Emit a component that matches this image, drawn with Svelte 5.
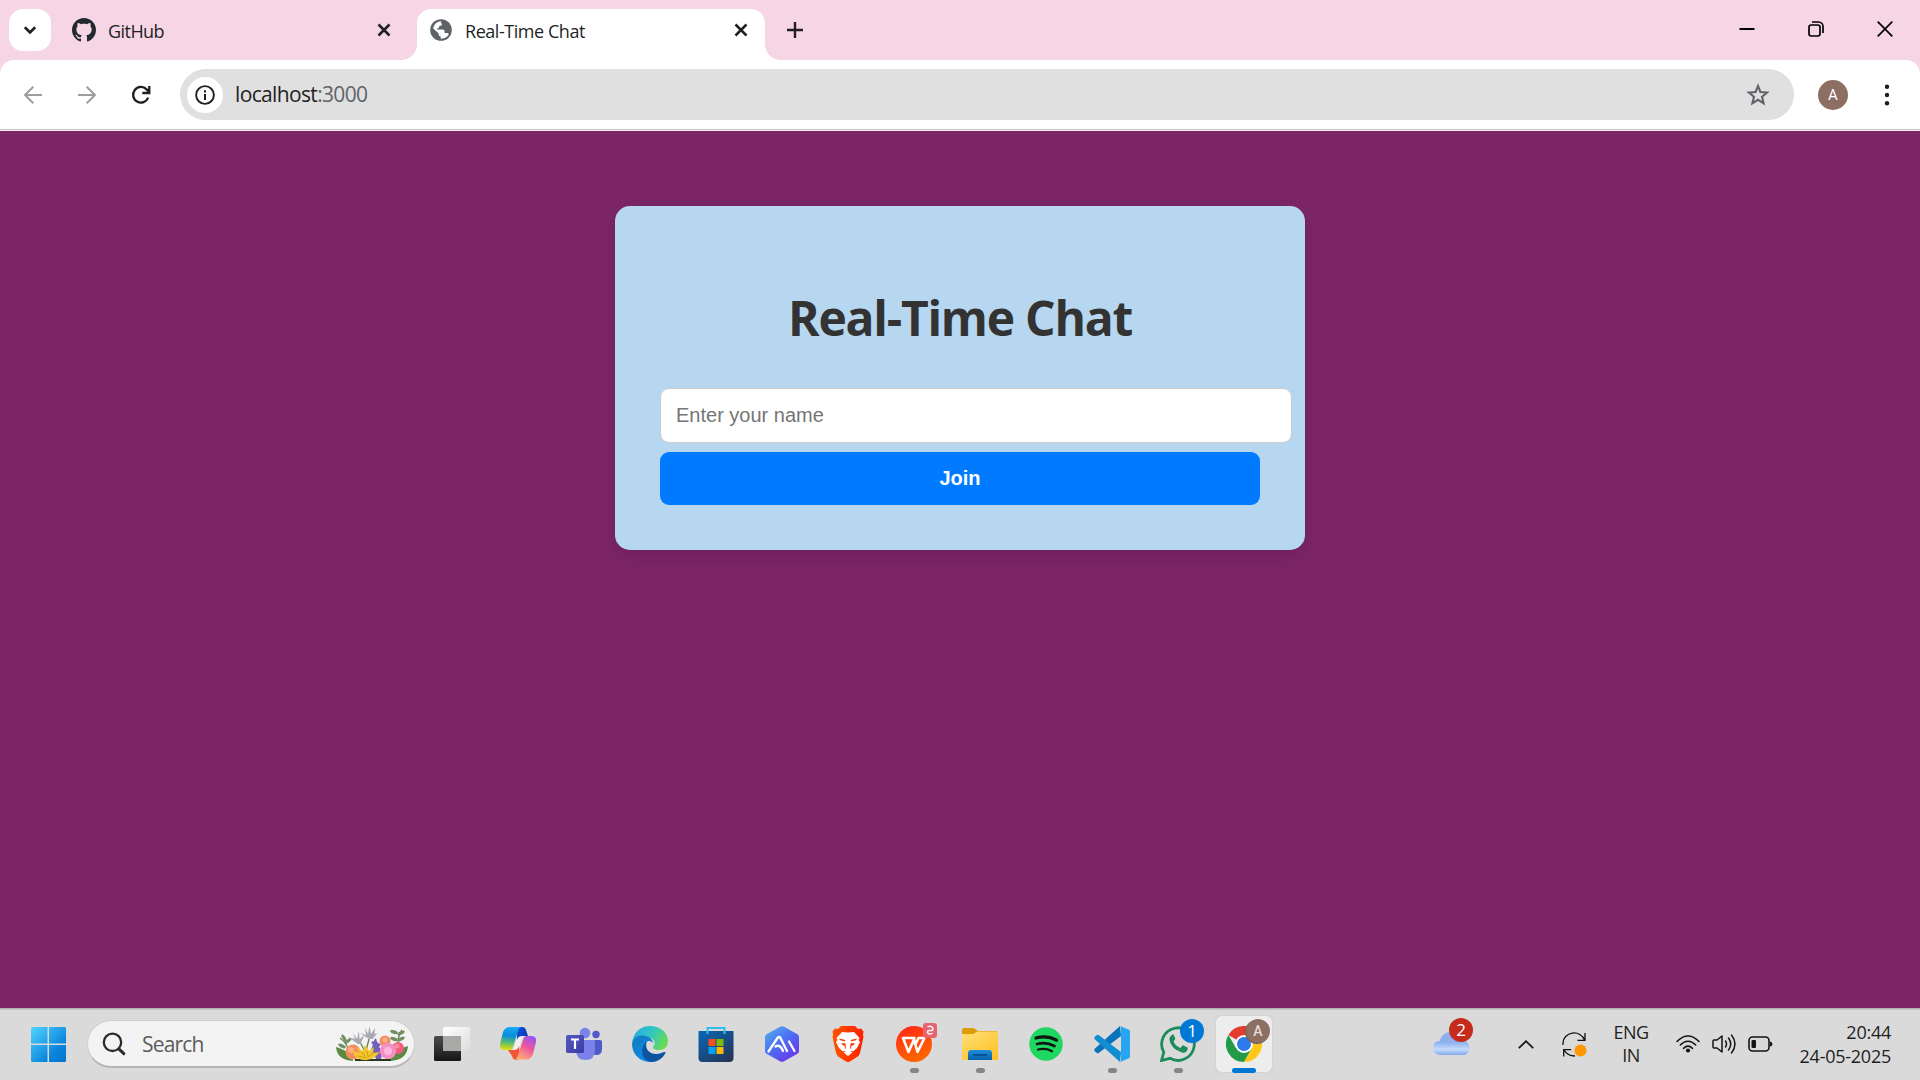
<script>
  let name = $state('');
  const petals = [0, 45, 90, 135, 180, 225, 270, 315];
</script>

<div class="screen">
  <div class="tabstrip">
    <button class="tab-search" aria-label="Search tabs">
      <svg width="42" height="42" viewBox="0 0 42 42"><path d="M15.8 18.3 21 23.4l5.2-5.1" fill="none" stroke="#1f1f1f" stroke-width="2.7" /></svg>
    </button>
    <div class="tab inactive">
      <svg class="favicon" width="24" height="24" viewBox="0 0 16 16"><path fill="#24292f" d="M8 0C3.58 0 0 3.58 0 8c0 3.54 2.29 6.53 5.47 7.59.4.07.55-.17.55-.38 0-.19-.01-.82-.01-1.49-2.01.37-2.53-.49-2.69-.94-.09-.23-.48-.94-.82-1.13-.28-.15-.68-.52-.01-.53.63-.01 1.08.58 1.23.82.72 1.21 1.87.87 2.33.66.07-.52.28-.87.51-1.07-1.78-.2-3.64-.89-3.64-3.95 0-.87.31-1.59.82-2.15-.08-.2-.36-1.02.08-2.12 0 0 .67-.21 2.2.82.64-.18 1.32-.27 2-.27s1.36.09 2 .27c1.53-1.04 2.2-.82 2.2-.82.44 1.1.16 1.92.08 2.12.51.56.82 1.27.82 2.15 0 3.07-1.87 3.75-3.65 3.95.29.25.54.73.54 1.48 0 1.07-.01 1.93-.01 2.2 0 .21.15.46.55.38A8.01 8.01 0 0 0 16 8c0-4.42-3.58-8-8-8Z" /></svg>
      <span class="tab-title github">GitHub</span>
      <svg class="x" width="14" height="14" viewBox="0 0 14 14"><path d="m1.5 1.5 11 11m0-11-11 11" stroke="#1f1f1f" stroke-width="2.5" /></svg>
    </div>
    <div class="tab active">
      <svg class="favicon" width="24" height="24" viewBox="0 0 24 24"><circle cx="12" cy="12" r="10.8" fill="#5f6368" /><path fill="#fff" d="M12.2 3.2c-.4 1.2-.1 2.2.7 2.7l-.2 1.5-2.3.4-.4 2-1.9.6v1.2h5.5c1.2 0 2 .9 2 2v1.5h2.3c1 0 1.7.7 1.9 1.5a8.7 8.7 0 0 1-8.1 4v-2.2c-1 0-2-.8-2-2v-1L4 10.2a8.7 8.7 0 0 1 8.2-7Z" /></svg>
      <span class="tab-title chat">Real-Time Chat</span>
      <svg class="x" width="14" height="14" viewBox="0 0 14 14"><path d="m1.5 1.5 11 11m0-11-11 11" stroke="#1f1f1f" stroke-width="2.5" /></svg>
    </div>
    <svg class="plus" width="16" height="16" viewBox="0 0 16 16"><path d="M8 0v16M0 8h16" stroke="#1f1f1f" stroke-width="2.4" /></svg>
    <div class="window-controls">
      <svg width="16" height="16" viewBox="0 0 16 16"><path d="M.5 8h15" stroke="#000" stroke-width="2" /></svg>
      <svg width="16" height="16" viewBox="0 0 16 16"><g fill="none" stroke="#000" stroke-width="1.7"><rect x="1" y="4" width="11" height="11" rx="2.2" /><path d="M4 1h6.5a4.5 4.5 0 0 1 4.5 4.5V12" /></g></svg>
      <svg width="16" height="16" viewBox="0 0 16 16"><path d="m.7.7 14.6 14.6m0-14.6L.7 15.3" stroke="#000" stroke-width="1.7" /></svg>
    </div>
  </div>

  <div class="toolbar">
    <svg class="nav" width="20" height="20" viewBox="0 0 20 20"><path d="M19 10H2.5M10.3 1.7 2 10l8.3 8.3" fill="none" stroke="#9e9e9e" stroke-width="2" /></svg>
    <svg class="nav" width="20" height="20" viewBox="0 0 20 20"><path d="M1 10h16.5M9.7 1.7 18 10l-8.300 8.3" fill="none" stroke="#9e9e9e" stroke-width="2" /></svg>
    <svg class="nav" width="20" height="20" viewBox="0 0 20 20"><path d="M17.2 12.6A7.800 7.800 0 1 1 15.600 4.400L17.600 6.500M18.300 1v7h-7" fill="none" stroke="#1f1f1f" stroke-width="2.3" /></svg>
    <div class="omnibox">
      <span class="info">
        <svg width="20" height="20" viewBox="0 0 20 20"><circle cx="10" cy="10" r="8.9" fill="none" stroke="#1f1f1f" stroke-width="1.9" /><path d="M10 9v6M10 5.200v2.200" stroke="#1f1f1f" stroke-width="2" /></svg>
      </span>
      <span class="url">localhost<span>:3000</span></span>
      <svg class="star" width="24" height="24" viewBox="0 0 24 24"><path d="m12 3 2.400 6 6.700.5-5.100 4.300 1.600 6.500-5.600-3.500-5.600 3.500 1.600-6.500-5.100-4.300 6.700-.5Z" fill="none" stroke="#5f6368" stroke-width="2.1" /></svg>
    </div>
    <span class="avatar">A</span>
    <svg class="dots" width="6" height="22" viewBox="0 0 6 22"><g fill="#1f1f1f"><circle cx="3" cy="2.700" r="2.200" /><circle cx="3" cy="11" r="2.200" /><circle cx="3" cy="19.300" r="2.200" /></g></svg>
  </div>

  <main>
    <div class="card">
      <h1>Real-Time Chat</h1>
      <input placeholder="Enter your name" bind:value={name} />
      <button class="join">Join</button>
    </div>
  </main>

  <footer>
    <svg class="start" width="35" height="35" viewBox="0 0 35 35">
      <defs><linearGradient id="win" gradientUnits="userSpaceOnUse" x1="0" y1="0" x2="35" y2="35"><stop offset="0" stop-color="#50d5ff" /><stop offset=".7" stop-color="#0a84dc" /><stop offset="1" stop-color="#0074cf" /></linearGradient></defs>
      <path fill="url(#win)" d="M1.500 0H16.500v16.500H0V1.500Q0 0 1.500 0ZM18 0h15.500Q35 0 35 1.500v15H18ZM0 18h16.500v17h-15Q0 35 0 33.500ZM18 18h17v15.500q0 1.500-1.500 1.500H18Z" />
    </svg>
    <div class="search">
      <svg width="24" height="24" viewBox="0 0 24 24"><circle cx="10.500" cy="10.300" r="8.700" fill="none" stroke="#2b2b2b" stroke-width="2.300" /><path d="m16.800 16.800 5 4.800" stroke="#2b2b2b" stroke-width="3" stroke-linecap="round" /></svg>
      <span>Search</span>
      <svg class="flowers" width="72" height="36" viewBox="0 0 72 36">
        <path fill="#5d8a43" d="M0 21q1 13 17 14-1-9-17-14ZM72 20q-1 14-18 15 2-10 18-15Z" />
        <g stroke="#67814c" stroke-width="1.300" fill="none"><path d="M4 12q9 6 9 18M66 4q-5 6-4 20M33 33 24 16M28 33l5-20M32 33l8-20" /></g>
        <g fill="#718f62"><ellipse cx="6" cy="20" rx="4" ry="1.700" transform="rotate(25 6 20)" /><ellipse cx="8" cy="12" rx="4" ry="1.600" transform="rotate(60 8 12)" /><ellipse cx="12" cy="15" rx="4" ry="1.500" transform="rotate(-40 12 15)" /><ellipse cx="58" cy="6" rx="4" ry="1.800" transform="rotate(20 58 6)" /><ellipse cx="65" cy="7" rx="4" ry="1.700" transform="rotate(-25 65 7)" /><ellipse cx="58" cy="13" rx="4" ry="1.800" transform="rotate(20 58 13)" /><ellipse cx="65" cy="13" rx="4" ry="1.700" transform="rotate(-25 65 13)" /></g>
        <g fill="#a9a9b6"><path d="m22 18-10-7 7 2-2-6 4 6 2-8 .5 8 5-4-4 9ZM33 13l-9-6 6 2-1-7 3 6 1.500-8 1.500 8 4-6-.5 6 3-1-5 6Z" /></g>
        <path fill="#7561bd" d="m39 12 3 5 3 1-2 3 4 4-2 8h-5l-4-9 1-5-2-3 3-1Z" />
        <g fill="#f28d5e"><circle cx="17" cy="26" r="7.500" /><circle cx="49" cy="15" r="5.500" /></g>
        <g fill="#ffb184"><circle cx="15" cy="24" r="3" /><circle cx="20" cy="28" r="2.500" /><circle cx="49" cy="14" r="2.500" /></g>
        <circle cx="62" cy="22" r="6" fill="#ee5d7d" />
        {#each petals as angle}
          <circle cx="52" cy="20.500" r="3.800" fill="#f48fc4" transform="rotate({angle} 52 25)" />
        {/each}
        <circle cx="52" cy="25" r="4" fill="#ffb7dc" /><circle cx="61" cy="20" r="2.500" fill="#ff8ca0" />
        <path d="M19 34h36" stroke="#293719" stroke-width="2" />
        <path fill="#f3c52c" d="m16 25 8 2-4-6 7 4 2-6 4 6 5-4-1 6 7-1-5 5q-8 6-18 1Z" /><path d="m22 30 8 2-4-6m5-1 1 6 5-4" stroke="#d6a212" fill="none" />
      </svg>
    </div>

    <div class="apps">
      <span class="app"><svg width="36" height="36" viewBox="0 0 36 36">
        <defs><linearGradient id="tvd" x2="0" y2="1"><stop stop-color="#4c4c4b" /><stop offset="1" stop-color="#161616" /></linearGradient><linearGradient id="tvl" x2="1" y2="1"><stop stop-color="#fff" /><stop offset="1" stop-color="#dcdcdc" /></linearGradient></defs>
        <rect y="10" width="27" height="25" rx="1.500" fill="url(#tvd)" /><rect x="9" y="1" width="27" height="24" rx="1.500" fill="url(#tvl)" /><path d="M9 10h18v15H10.500Q9 25 9 23.500Z" fill="#a9a9a8" />
      </svg></span>

      <span class="app"><svg width="36" height="36" viewBox="0 0 36 36">
        <defs>
          <linearGradient id="cp1" x1=".3" x2=".2" y2="1"><stop stop-color="#18a8f4" /><stop offset=".35" stop-color="#078ddc" /><stop offset=".65" stop-color="#54b979" /><stop offset="1" stop-color="#eee400" /></linearGradient>
          <linearGradient id="cp2" x1=".8" x2=".3" y2="1"><stop stop-color="#9553f3" /><stop offset=".45" stop-color="#ed55a1" /><stop offset="1" stop-color="#ffae72" /></linearGradient>
          <linearGradient id="cp3" x2="1" y2=".6"><stop stop-color="#0b54d7" /><stop offset="1" stop-color="#1638b8" /></linearGradient>
        </defs>
        <path fill="#f4f0f0" d="M18 10h5l-5 14h-5Z" />
        <path fill="url(#cp3)" d="M17 1h5.500q2.500 0 3.500 3l2 6h-6q-4 0-5 4Z" />
        <path fill="#f15534" d="M8 24h6q4 0 5-4l1 12q-1 2-4 2-3 0-4-4Z" />
        <path fill="url(#cp1)" d="M10 1h12q-3 0-4 4l-5 16q-1 3-4 3H5q-6 0-5-6l3-12Q5 1 10 1Z" />
        <path fill="url(#cp2)" d="M26 33.500H14q3-.5 4-4.500l5-15q1-4 4-4h4q6 0 5 6l-3 12q-2 5.500-7 5.500Z" />
      </svg></span>

      <span class="app"><svg width="36" height="36" viewBox="0 0 36 36">
        <defs><linearGradient id="tm" x2="1" y2="1"><stop stop-color="#5559c0" /><stop offset="1" stop-color="#393ca4" /></linearGradient></defs>
        <circle cx="30" cy="8.500" r="3.700" fill="#5059c9" /><path d="M25 14h9q2 0 2 2v7q0 6-6 6-4 0-5-4Z" fill="#5059c9" /><circle cx="19" cy="7" r="5.300" fill="#7b83eb" /><path d="M11 14h16.500q1.500 0 1.500 1.500V24q0 10-9.500 10T10 24Z" fill="#7b83eb" /><rect y="9" width="18" height="18" rx="1.700" fill="url(#tm)" /><path d="M5 13.500h8M9 13.500v9.500" stroke="#fff" stroke-width="2.200" />
      </svg></span>

      <span class="app"><svg width="36" height="36" viewBox="0 0 36 36">
        <defs><linearGradient id="eg" y1=".2" x2="1" y2=".6"><stop stop-color="#2aa8dd" /><stop offset=".5" stop-color="#31c7c4" /><stop offset="1" stop-color="#69dc4d" /></linearGradient><linearGradient id="eb" x2=".7" y2="1"><stop stop-color="#1379bd" /><stop offset="1" stop-color="#0c8eea" /></linearGradient></defs>
        <path fill="url(#eg)" d="M0 17C1 7 8 0 18 0c11 0 18 7 18 15 0 6-4 9-9 9-4 0-7-2-6-3 3-3 2-8-3-9C11 9 4 11 0 17Z" />
        <path fill="url(#eb)" d="M0 18c1-7 7-10 14-8 4 1 7 4 7 7-4-4-8-1-8 3 0 8 6 13 13 14-11 6-26-2-26-16Z" />
        <path fill="#0c53a0" d="M15 15c-3 7 2 13 9 13 4 0 7-2 9-2q1 0 .500 1c-3 6-9 9-14 9-9-1-13-13-4.500-21Z" />
      </svg></span>

      <span class="app"><svg width="36" height="36" viewBox="0 0 36 36">
        <defs><linearGradient id="st" x2=".8" y2="1"><stop stop-color="#0868b8" /><stop offset="1" stop-color="#253659" /></linearGradient></defs>
        <path d="M.5 5h35v27q0 4-4 4h-27q-4 0-4-4Z" fill="url(#st)" /><path d="M9.500 8V2h17v6" fill="none" stroke="#2cbff2" stroke-width="2" /><path fill="#f25022" d="M10.500 13h7v7h-7z" /><path fill="#7fba00" d="M18.500 13h7v7h-7z" /><path fill="#00a4ef" d="M10.500 21h7v7h-7z" /><path fill="#ffb900" d="M18.500 21h7v7h-7z" />
      </svg></span>

      <span class="app"><svg width="36" height="36" viewBox="0 0 36 36">
        <defs><linearGradient id="hx" x2=".8" y2="1"><stop stop-color="#55b4ec" /><stop offset=".5" stop-color="#4b70f4" /><stop offset="1" stop-color="#6c32e8" /></linearGradient></defs>
        <path d="M16 .800q2-1 4 0l13 7.200q2 1 2 3v14q0 2-2 3l-13 7.200q-2 1-4 0L3 28q-2-1-2-3V11q0-2 2-3Z" fill="url(#hx)" /><path d="M4.500 25.500 13.500 12q1.500-2 3 0L23 25M11.500 20.500q2.500-1.500 4.500 0t3 4.500M25 15.500l5.500 9.500" fill="none" stroke="#fff" stroke-width="2.300" stroke-linecap="round" />
      </svg></span>

      <span class="app"><svg width="36" height="36" viewBox="0 0 36 36">
        <defs><linearGradient id="br"><stop stop-color="#ff5500" /><stop offset="1" stop-color="#ff2000" /></linearGradient></defs>
        <path fill="url(#br)" d="M11 0h14l3 3 3-.500 2.500 3L33 9l.500 2L30 27q-1 3-3 4l-7 4.500q-2 1-4 0L9 31q-2-1-3-4L2.500 11 3 9l-.500-3.500 2.500-3L8 3Z" />
        <path fill="#fff" d="m18 6.500 6-.5 5.500 6-1 2 1.500 2-3 6-4 3.500-2.500-2 1-3.500 3.500-2-1.500-1-3 .5-.5 5 2.500 2-4.500 3-4.500-3 2.500-2-.5-5-3-.5-1.500 1 3.500 2 1 3.500-2.500 2L9 22l-3-6 1.500-2-1-2L12 6Z" />
        <path fill="#fb4315" d="m9.500 12.500 6 1.500-1 1.500-5-1.500ZM26.500 12.500l-6 1.500 1 1.500 5-1.500Z" /><path fill="#fff" d="m18 24.500 4.500 2-4.500 3.500-4.500-3.500Z" />
      </svg></span>

      <span class="app"><svg width="36" height="36" viewBox="0 0 36 36">
        <defs><linearGradient id="wp" x2=".4" y2="1"><stop stop-color="#ff2419" /><stop offset="1" stop-color="#ff6400" /></linearGradient></defs>
        <circle cx="18" cy="18" r="18" fill="url(#wp)" /><path d="M19.500 12H7l5.500 14L18 13.500 21.500 26 28.500 12h-6l-3.500 7" fill="none" stroke="#fff" stroke-width="2.600" stroke-linejoin="round" />
      </svg><span class="link-badge"><svg width="14" height="15" viewBox="0 0 14 15"><rect width="14" height="15" rx="3" fill="#e66370" /><path d="M4.500 4q2.500-1.500 4.500 0t0 3.500H6q-2 .5-1.500 2t2.500 1.500 2.500-1" fill="none" stroke="#fff" stroke-width="1.400" /></svg></span><i class="dot"></i></span>

      <span class="app"><svg width="36" height="36" viewBox="0 0 36 36">
        <defs><linearGradient id="fo" x2=".7" y2="1"><stop stop-color="#ffe078" /><stop offset="1" stop-color="#fdc228" /></linearGradient><linearGradient id="fb" x2="0" y2="1"><stop stop-color="#1c90dd" /><stop offset="1" stop-color="#0860a9" /></linearGradient></defs>
        <path d="M0 4q0-2 2-2h9q1 0 2 1l3 2h18q2 0 2 2v8H0Z" fill="#dc9b07" /><path d="M0 8h11q1 0 2-1l2-1.500h20q1 0 1 1V34H0Z" fill="url(#fo)" /><path d="M6 34v-7q0-3 3-3h18q3 0 3 3v7Z" fill="url(#fb)" /><path d="M11 29h14" stroke="#075294" stroke-width="2" />
      </svg><i class="dot"></i></span>

      <span class="app"><svg width="36" height="36" viewBox="0 0 36 36"><circle cx="18" cy="18" r="16.700" fill="#1ed760" /><g fill="none" stroke="#101510" stroke-linecap="round"><path d="M8 12q11-3 20.500 2.200" stroke-width="3.200" /><path d="M9 18q9-2.500 17.500 2" stroke-width="2.700" /><path d="M10 23.500q8-1.800 14 1.700" stroke-width="2.200" /></g></svg></span>

      <span class="app"><svg width="36" height="36" viewBox="0 0 36 36">
        <path d="M26 0 1 22.500q-1.500 1.500 0 3l1.500 1.300q1.200 1 2.500 0L27 10Z" fill="#0873b8" /><path d="M26 36 1 13.500q-1.500-1.500 0-3l1.500-1.300q1.200-1 2.500 0L27 26Z" fill="#118ed0" /><path d="m26 0 8.500 3.500Q36 4 36 5.500v25q0 1.500-1.500 2L26 36q1-1 1-2V2q0-1-1-2Z" fill="#27a5f1" />
      </svg><i class="dot"></i></span>

      <span class="app"><svg width="36" height="36" viewBox="0 0 36 36">
        <path d="m1.500 34.500 2.300-8.400A16.300 16.300 0 1 1 10 32.300Z" fill="none" stroke="#1d8c5b" stroke-width="2.800" /><path fill="#1d8c5b" d="M12 9q-3 2-2.500 5Q11 23 22 26.500q4 1 5.500-3 .500-1.500 0-2l-4-2q-1-.500-1.500.500l-1.500 2q-5-2-7-6.500l1.500-2q.500-.700 0-1.500l-1.500-3.500Q13 7.700 12 9Z" />
      </svg><span class="count">1</span><i class="dot"></i></span>

      <span class="app current"><svg width="36" height="36" viewBox="0 0 36 36">
        <path fill="#e33b2e" d="M18 18 2.400 9A18 18 0 0 1 33.600 9Z" /><path fill="#229b48" d="M2.400 9A18 18 0 0 0 18 36l7.800-13.500L18 18 10 22Z" /><path fill="#ffc817" d="M33.600 9H18v9l7.800 4.500L18 36A18 18 0 0 0 33.600 9Z" /><circle cx="18" cy="18" r="9" fill="#fff" /><circle cx="18" cy="18" r="7" fill="#2d7bea" />
      </svg><span class="profile">A</span><i class="line"></i></span>
    </div>

    <div class="tray">
      <span class="weather">
        <svg width="36" height="24" viewBox="0 0 36 24"><defs><linearGradient id="cl" x2="0" y2="1"><stop stop-color="#84a9ef" /><stop offset=".6" stop-color="#c4dcfb" /><stop offset="1" stop-color="#82a8ee" /></linearGradient></defs><path fill="#8eb0ef" d="M6 12Q8 0 18 0q9 0 11 8 7 1 7 8 0 7-7 7H9Z" /><path fill="url(#cl)" d="M8 23q-8 0-8-7t7-7q5 0 8 4 2-3 6-3h8q7 1 7 7 0 6-7 6Z" /></svg>
        <b>2</b>
      </span>
      <svg class="up" width="16" height="9" viewBox="0 0 16 9"><path d="m.800 8.200 7.200-7 7.200 7" fill="none" stroke="#1a1a1a" stroke-width="1.800" /></svg>
      <svg class="sync" width="25" height="25" viewBox="0 0 25 25"><g fill="none" stroke="#111" stroke-width="1.300"><path d="M1 13V11A11 10 0 0 1 22.500 8M23 1v7.300h-7.500M1.700 24.500V17.700h7.500M2 18Q5.500 24 13 24" /></g><circle cx="18.500" cy="18.500" r="6" fill="#ff9800" /></svg>
      <div class="lang"><span>ENG</span><span>IN</span></div>
      <svg class="wifi" width="24" height="18" viewBox="0 0 24 18"><g fill="none" stroke="#151515" stroke-width="1.600" stroke-linecap="round"><path d="M1 6.500Q12-4.500 23 6.500M4.300 10Q12 2.500 19.700 10M7.500 13.300q4.500-4.200 9 0" /></g><circle cx="12" cy="15.500" r="2.100" fill="#151515" /></svg>
      <svg class="sound" width="25" height="20" viewBox="0 0 25 20"><g fill="none" stroke="#151515" stroke-width="1.500" stroke-linejoin="round" stroke-linecap="round"><path d="M1 7q0-1 1-1h3l5-4v16l-5-4H2q-1 0-1-1ZM13.500 7q2 3 0 6M16.500 4q4.500 6 0 12M19.500 1q7 9 0 18" /></g></svg>
      <svg class="battery" width="25" height="16" viewBox="0 0 25 16"><rect x="1" y="1" width="20" height="14" rx="3.500" fill="none" stroke="#151515" stroke-width="1.600" /><rect x="3.500" y="4" width="4.500" height="8" rx="1" fill="#151515" /><path d="M22 5.500q2 0 2.500 2.500-.500 2.500-2.500 2.500Z" fill="#151515" /></svg>
      <div class="clock"><span class="time">20:44</span><span class="date">24-05-2025</span></div>
    </div>
  </footer>
</div>

<style>
  :global(body) { margin: 0; overflow: hidden; }
  .screen { width: 1920px; height: 1080px; display: flex; flex-direction: column; overflow: hidden; font-family: "Open Sans", "Noto Sans", sans-serif; background: #f6d5e4; color: #1f1f1f; }
  svg { display: block; flex: none; }
  button { font: inherit; border: 0; padding: 0; }

  .tabstrip { height: 60px; flex: none; display: flex; background: #f6d5e4; }
  .tab-search { width: 42px; height: 42px; margin: 9px 0 0 9px; border-radius: 14px; background: #fff; }
  .tab { box-sizing: border-box; height: 51px; margin-top: 9px; display: flex; align-items: flex-start; }
  .inactive { width: 366px; padding: 9px 26px 0 21px; }
  .active { position: relative; width: 348px; background: #fff; border-radius: 14px 14px 0 0; padding: 9px 17px 0 12px; }
  .active::before, .active::after { content: ""; position: absolute; bottom: 0; width: 15px; height: 15px; }
  .active::before { right: 100%; background: radial-gradient(circle at 0 0, transparent 14.5px, #fff 15px); }
  .active::after { left: 100%; background: radial-gradient(circle at 100% 0, transparent 14.5px, #fff 15px); }
  .tab-title { font-size: 18px; line-height: 26px; margin-left: 12px; white-space: nowrap; }
  .github { letter-spacing: -.55px; }
  .chat { letter-spacing: -.45px; }
  .x { margin: 5px 0 0 auto; }
  .plus { margin: 22px 0 0 22px; }
  .window-controls { display: flex; gap: 53px; margin: 21px 27px 0 auto; }

  .toolbar { height: 71px; box-sizing: border-box; flex: none; display: flex; align-items: center; padding: 0 30px 2px 23px; background: #fff; border-radius: 14px 14px 0 0; box-shadow: inset 0 -1px #f0eef0, inset 0 -2px #c8c8c8; }
  .nav { margin-right: 34px; }
  .nav:nth-child(3) { margin-right: 29px; }
  .omnibox { width: 1614px; height: 51px; box-sizing: border-box; flex: none; display: flex; align-items: center; padding: 0 24px 0 7px; background: #e0e0e0; border-radius: 26px; }
  .info { width: 36px; height: 36px; display: flex; align-items: center; justify-content: center; border-radius: 50%; background: #fff; }
  .url { margin-left: 12px; font-size: 21px; letter-spacing: -.65px; line-height: 30px; padding-bottom: 1px; }
  .url span { color: #5f6368; }
  .star { margin-left: auto; }
  .avatar { width: 30px; height: 30px; flex: none; margin-left: 24px; border-radius: 50%; background: #8d6e63; color: #fff; font: 15px/31px Roboto, sans-serif; text-align: center; }
  .dots { margin-left: auto; }

  main { flex: 1; display: flex; justify-content: center; align-items: flex-start; padding-top: 75px; background: #7b2565; }
  .card { width: 690px; height: 344px; box-sizing: border-box; padding: 80px 45px 45px; background: #b7d7f0; border-radius: 15px; box-shadow: 0 6px 18px rgba(0, 0, 0, .1); }
  h1 { margin: 0; height: 102px; font-size: 48px; line-height: 64px; text-align: center; color: #333; letter-spacing: -1.25px; white-space: nowrap; }
  input { display: block; width: 632px; height: 55px; box-sizing: border-box; padding: 0 15px; border: 1px solid #ccc; border-radius: 9px; background: #fff; font: 20px "Liberation Sans", Arial, sans-serif; outline: 0; }
  input::placeholder { color: #757575; opacity: 1; }
  .join { display: block; width: 600px; height: 53px; margin-top: 9px; border-radius: 9px; background: #007bff; color: #fff; font: bold 20px "Liberation Sans", Arial, sans-serif; }

  footer { height: 72px; box-sizing: border-box; flex: none; display: flex; align-items: center; padding: 0 29px 0 31px; background: #dadada; box-shadow: inset 0 1px #b3aeb1, inset 0 2px #c6c6c6; }
  .search { width: 328px; height: 48px; box-sizing: border-box; margin-left: 21px; padding: 0 6px 0 14px; display: flex; align-items: center; border: 1px solid #cecece; border-width: 1px 1px 2px; border-bottom-color: #b5b5b5; border-radius: 24px; background: #f3f3f3; }
  .search span { margin-left: 16px; font-size: 21px; letter-spacing: -.8px; line-height: 30px; color: #5c5c5c; }
  .flowers { margin-left: auto; }
  .apps { display: flex; margin-left: 4px; }
  .app { position: relative; width: 66px; height: 72px; display: flex; align-items: center; justify-content: center; }
  .dot, .line { position: absolute; bottom: 7px; left: 29px; width: 9px; height: 5px; border-radius: 3px; background: #858585; }
  .line { left: 21px; width: 24px; background: #0078d4; }
  .current::before { content: ""; position: absolute; left: 5px; top: 8px; width: 56px; height: 56px; border-radius: 6px; background: #ededed; box-shadow: 0 0 0 1px #d2d2d2; }
  .current svg { position: relative; }
  .link-badge { position: absolute; left: 42px; top: 15px; }
  .count, .profile { position: absolute; left: 35px; top: 11px; width: 24px; height: 24px; border-radius: 50%; background: #0078d4; color: #fff; font-size: 17px; line-height: 24px; text-align: center; }
  .profile { background: #8d6e63; color: #e4dcd9; font: 500 14px/25px Roboto, sans-serif; box-shadow: -1px 1px #755a52; }

  .tray { margin-left: auto; display: flex; align-items: center; }
  .weather { position: relative; margin-right: 49px; }
  .weather b { position: absolute; left: 16px; top: -14px; width: 24px; height: 24px; border-radius: 50%; background: #c42b1c; color: #fff; font-size: 17px; font-weight: 400; line-height: 24px; text-align: center; }
  .sync { margin-left: 28px; }
  .lang { width: 44px; margin-left: 22px; display: flex; flex-direction: column; text-align: center; font-size: 18px; line-height: 23px; letter-spacing: -.5px; }
  .wifi { margin-left: 23px; }
  .sound { margin-left: 12px; }
  .battery { margin-left: 11px; }
  .clock { width: 118px; display: flex; flex-direction: column; text-align: right; font-size: 18px; line-height: 24px; letter-spacing: -.25px; white-space: nowrap; padding-bottom: 1px; }
</style>
